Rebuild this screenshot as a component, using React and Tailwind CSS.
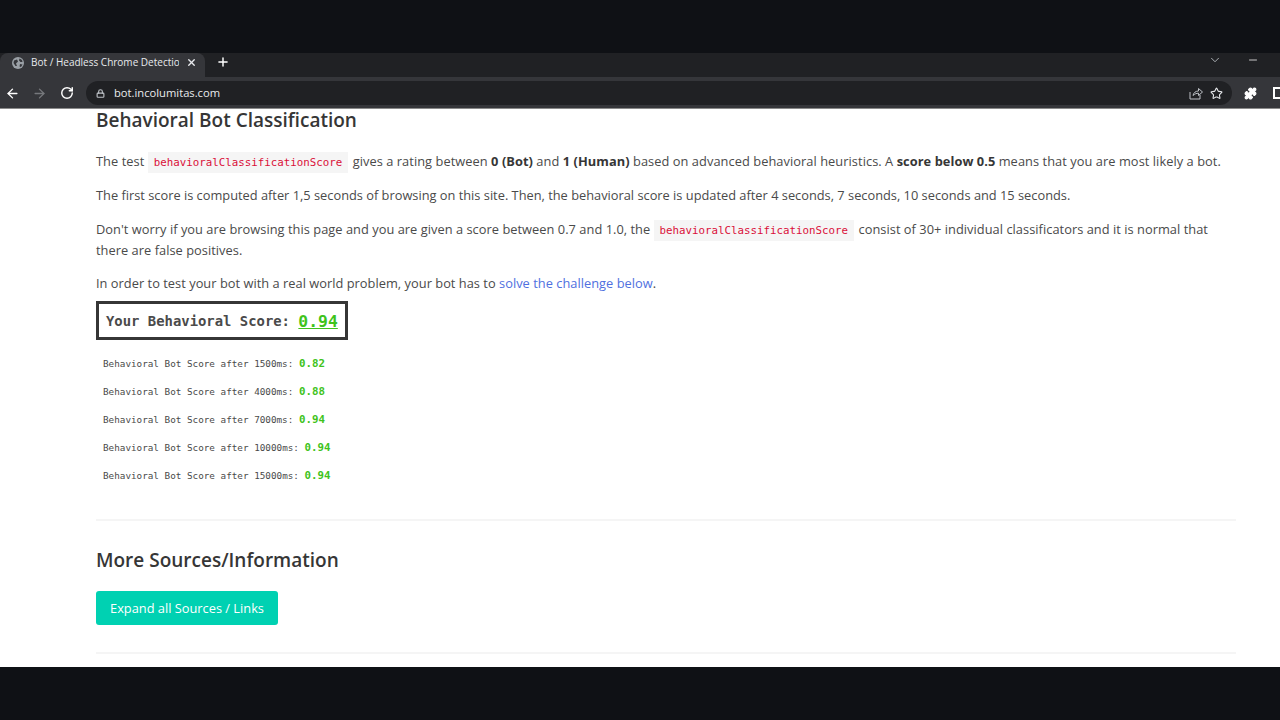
import { ArrowLeft, ArrowRight, RotateCw, Lock, X, Plus, ChevronDown, Minus, Star, Puzzle } from "lucide-react";

const scores = [
  ["1500", "0.82"],
  ["4000", "0.88"],
  ["7000", "0.94"],
  ["10000", "0.94"],
  ["15000", "0.94"],
];

function Code({ children }) {
  return (
    <code className="bg-[#f5f5f5] text-[#da1039] font-['DejaVu_Sans_Mono',monospace] text-[10.8px] tracking-normal leading-none px-[6px] py-[4px] mr-[1px]">
      {children}
    </code>
  );
}

function ChromeBar() {
  return (
    <div className="h-[55px] bg-[#202124] shrink-0 overflow-hidden">
      <div className="h-[24px] flex items-start relative">
        <div className="w-[205px] h-[24px] bg-[#35363a] rounded-t-lg flex items-center pl-[12px] pb-[5px] text-[#e8eaed] text-[10px] whitespace-nowrap">
          <svg viewBox="0 0 12 12" className="w-[12px] h-[12px] mr-[7px] shrink-0">
            <circle cx="6" cy="6" r="6" fill="#9aa0a6" />
            <path d="M2 3.5 L5 2.5 L6 4.5 L4 6.5 L5 9 L3.5 9 L1.5 6 Z M7.5 1.5 L10 3 L10.5 5 L8.5 5 L7 3.5 Z M8 7 L10.5 7.5 L9 10 L7.5 9.5 Z" fill="#35363a" />
          </svg>
          <span className="w-[148px] overflow-hidden">Bot / Headless Chrome Detection</span>
          <X className="w-[11px] h-[11px] ml-[7px] shrink-0" strokeWidth={3} />
        </div>
        <Plus className="w-[14px] h-[14px] text-white ml-[11px] mt-[2px]" strokeWidth={2.5} />
        <ChevronDown className="absolute left-[1208px] top-[0px] w-[14px] h-[14px] text-[#bdc1c6]" strokeWidth={1.5} />
        <Minus className="absolute left-[1247px] top-[1px] w-[12px] h-[12px] text-white" strokeWidth={1.5} />
      </div>
      <div className="h-[31px] bg-[#35363a] flex items-center pt-[1px]">
        <ArrowLeft className="w-[15px] h-[15px] text-white ml-[5px] shrink-0" strokeWidth={2.2} />
        <ArrowRight className="w-[15px] h-[15px] text-[#76787c] ml-[12px] shrink-0" strokeWidth={2.2} />
        <RotateCw className="w-[14px] h-[14px] text-white ml-[13px] shrink-0" strokeWidth={2.5} />
        <div className="ml-[12px] w-[1146px] shrink-0 h-[24px] rounded-full bg-[#202124] flex items-center text-[#e8eaed] text-[11.2px] pl-[10px]">
          <Lock className="w-[9px] h-[9px] text-[#bdc1c6] mr-[9px]" strokeWidth={3} />
          <span>bot.incolumitas.com</span>
          <svg viewBox="0 0 14 14" fill="none" stroke="#bdc1c6" strokeWidth="1" className="w-[14px] h-[14px] ml-auto mr-[7px]">
            <path d="M1 6 V13 H11 V9" />
            <path d="M4 9.5 C4.5 6.5 7 5 9.5 5 V2.5 L13.5 6 L9.5 9.5 V7.2 C7.5 7.2 5.5 8 4 9.5 Z" />
          </svg>
          <Star className="w-[13px] h-[13px] text-[#e8eaed] mr-[9px]" strokeWidth={2} />
        </div>
        <Puzzle className="w-[13px] h-[13px] text-white fill-white ml-[12px] shrink-0" />
        <div className="w-[12px] h-[12px] border-2 border-white ml-[16px] shrink-0" />
      </div>
    </div>
  );
}

export default function App() {
  return (
    <div className="w-[1280px] h-[720px] bg-[#0f1115] overflow-hidden pt-[53px] font-['Open_Sans','Noto_Sans',sans-serif]">
      <ChromeBar />
      <div className="h-[559px] bg-white border-t border-[#8a8a8a] overflow-hidden pl-[96px] pr-[44px] text-[#4a4a4a] text-[12.82px] leading-[21px]">
        <h2 className="text-[#363636] text-[19px] font-semibold leading-[24px] mt-[-1px] mb-[19px]">Behavioral Bot Classification</h2>
        <p className="mb-[13px] whitespace-nowrap tracking-[0.06px]">
          The test <Code>behavioralClassificationScore</Code> gives a rating between <strong className="text-[#363636]">0 (Bot)</strong> and <strong className="text-[#363636]">1 (Human)</strong> based on advanced behavioral heuristics. A <strong className="text-[#363636]">score below 0.5</strong> means that you are most likely a bot.
        </p>
        <p className="mb-[13px]">The first score is computed after 1,5 seconds of browsing on this site. Then, the behavioral score is updated after 4 seconds, 7 seconds, 10 seconds and 15 seconds.</p>
        <p className="mb-[12px] tracking-[0.04px]">
          Don't worry if you are browsing this page and you are given a score between 0.7 and 1.0, the <Code>behavioralClassificationScore</Code> consist of 30+ individual classificators and it is normal that there are false positives.
        </p>
        <p className="mb-[7px] tracking-[0.03px]">
          In order to test your bot with a real world problem, your bot has to <a className="text-[#4f70e0]">solve the challenge below</a>.
        </p>
        <div className="w-fit h-[39px] border-[3px] border-[#363636] flex items-center pl-[7px] pr-[7px] pt-[1px] font-['DejaVu_Sans_Mono',monospace] text-[13.9px] font-bold">
          Your Behavioral Score:&nbsp;<span className="text-[#3fc31c] underline text-[16.4px]">0.94</span>
        </div>
        <div className="mt-[9px] pl-[7px] font-['DejaVu_Sans_Mono',monospace] text-[9.3px] flex flex-col">
          {scores.map(([ms, value]) => (
            <div key={ms} className="h-[28px] flex items-center whitespace-pre">
              Behavioral Bot Score after {ms}ms: <span className="text-[#3fc31c] font-bold text-[10.8px]">{value}</span>
            </div>
          ))}
        </div>
        <hr className="border-0 h-[2px] bg-[#f5f5f5] mt-[30px]" />
        <h2 className="text-[#363636] text-[19px] font-semibold leading-[24px] mt-[27px] mb-[19px]">More Sources/Information</h2>
        <button className="h-[34px] w-[182px] rounded-[3px] bg-[#00d1b2] text-white text-[12.82px] block">Expand all Sources / Links</button>
        <hr className="border-0 h-[2px] bg-[#f5f5f5] mt-[27px]" />
      </div>
    </div>
  );
}
